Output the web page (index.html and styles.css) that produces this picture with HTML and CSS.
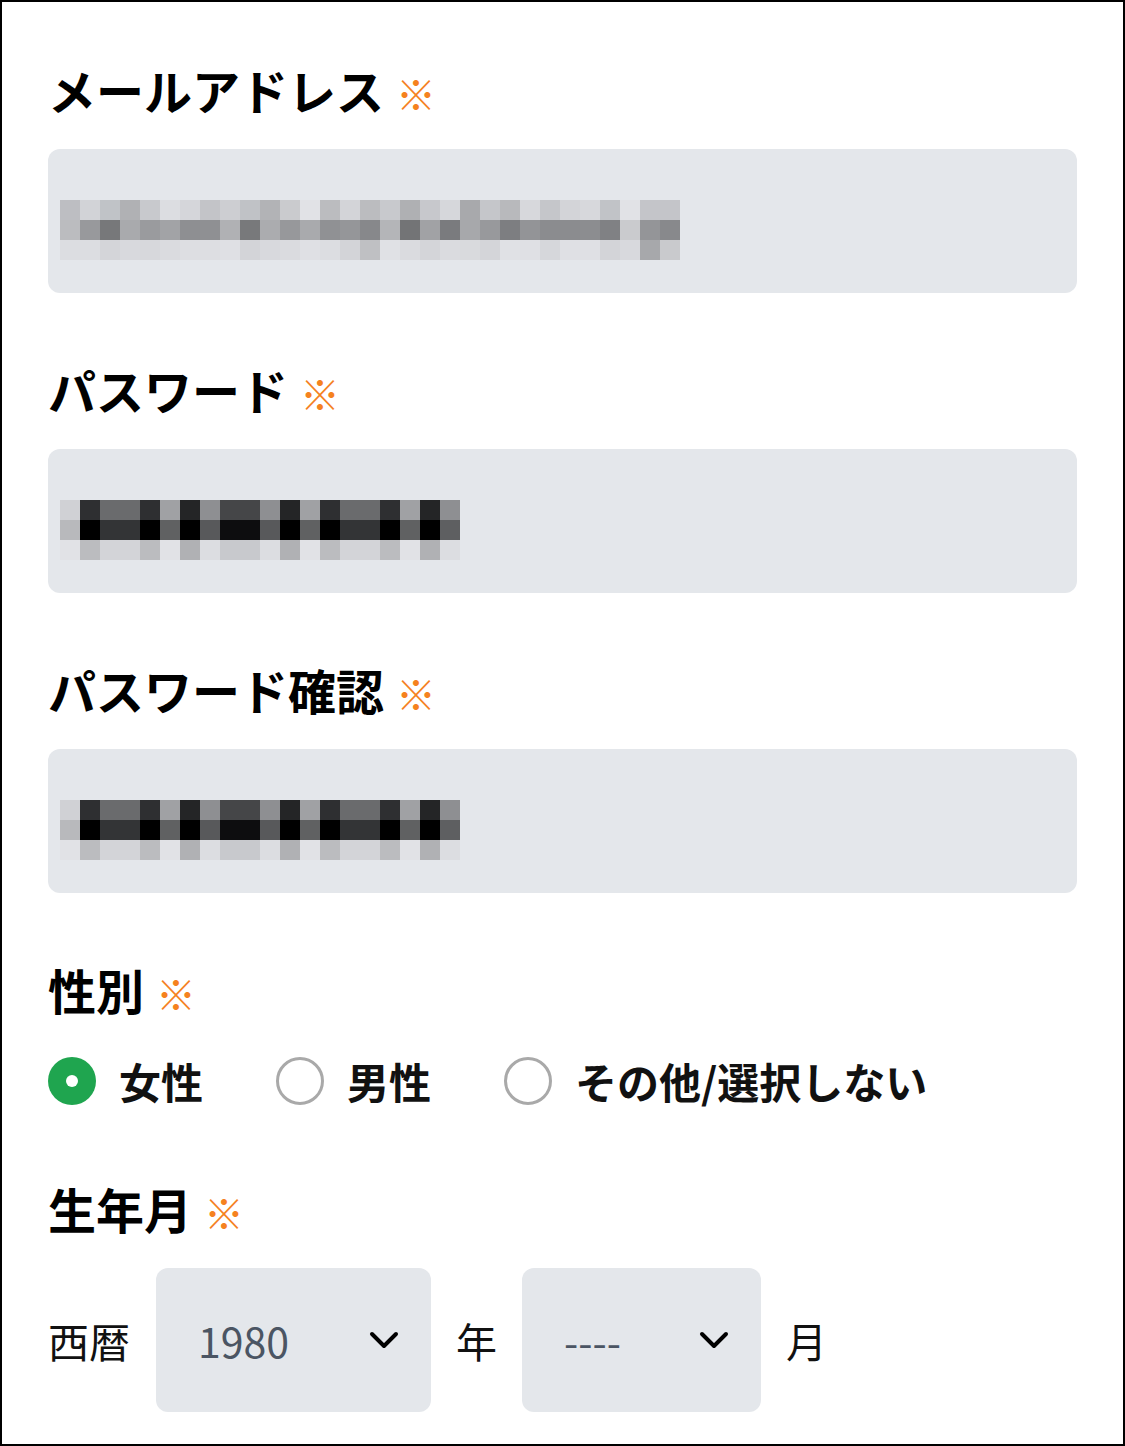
FILE: index.html
```html
<!DOCTYPE html>
<html lang="ja">
<head>
<meta charset="utf-8">
<title>会員登録</title>
<link rel="stylesheet" href="styles.css">
<script src="script.js" defer></script>
</head>
<body>
<div class="page">
  <div class="field">
    <div class="label">メールアドレス<span class="req">※</span></div>
    <div class="input"><div class="mosaic" data-set="email"></div></div>
  </div>
  <div class="field">
    <div class="label">パスワード<span class="req">※</span></div>
    <div class="input"><div class="mosaic" data-set="pass"></div></div>
  </div>
  <div class="field">
    <div class="label">パスワード確認<span class="req">※</span></div>
    <div class="input"><div class="mosaic" data-set="pass"></div></div>
  </div>
  <div class="field field-gender">
    <div class="label">性別<span class="req">※</span></div>
    <div class="radios">
      <div class="radio-item"><span class="radio checked"></span><span class="radio-text">女性</span></div>
      <div class="radio-item"><span class="radio"></span><span class="radio-text">男性</span></div>
      <div class="radio-item"><span class="radio"></span><span class="radio-text">その他/選択しない</span></div>
    </div>
  </div>
  <div class="field field-birth">
    <div class="label">生年月<span class="req">※</span></div>
    <div class="date-row">
      <span class="date-text">西暦</span>
      <div class="select select-year">
        <span class="select-value">1980</span>
        <svg class="chevron" viewBox="0 0 30 18" width="30" height="18"><path d="M3 3 L15 15 L27 3" fill="none" stroke="#000" stroke-width="4" stroke-linecap="round" stroke-linejoin="round"/></svg>
      </div>
      <span class="date-text">年</span>
      <div class="select select-month">
        <span class="select-value">----</span>
        <svg class="chevron" viewBox="0 0 30 18" width="30" height="18"><path d="M3 3 L15 15 L27 3" fill="none" stroke="#000" stroke-width="4" stroke-linecap="round" stroke-linejoin="round"/></svg>
      </div>
      <span class="date-text">月</span>
    </div>
  </div>
</div>
</body>
</html>
```

FILE: styles.css
```css
html, body {
  margin: 0;
  padding: 0;
  background: #fff;
}

body {
  font-family: "Noto Sans CJK JP", "Noto Sans", sans-serif;
  color: #111;
}

.page {
  width: 1125px;
  height: 1446px;
  box-sizing: border-box;
  border: 2px solid #000;
  padding: 57px 46px 0;
  overflow: hidden;
}

.field {
  margin-bottom: 66px;
}

.label {
  height: 60px;
  line-height: 60px;
  font-size: 48px;
  font-weight: 700;
  color: #000;
  white-space: nowrap;
}

.req {
  font-size: 40px;
  font-weight: 400;
  color: #f5821f;
  margin-left: 12px;
}

.input {
  margin-top: 30px;
  height: 144px;
  box-sizing: border-box;
  background: #e4e7eb;
  border-radius: 12px;
  padding: 51px 0 0 12px;
}

.mosaic {
  display: grid;
  grid-auto-flow: column;
  grid-template-rows: repeat(3, 20px);
  grid-auto-columns: 20px;
  width: max-content;
}

.mosaic span {
  display: block;
  width: 20px;
  height: 20px;
}

.field-gender {
  margin-bottom: 73px;
}

.radios {
  margin-top: 38px;
  display: flex;
  align-items: center;
  gap: 73px;
  height: 48px;
}

.radio-item {
  display: flex;
  align-items: center;
  gap: 23px;
}

.radio {
  width: 48px;
  height: 48px;
  box-sizing: border-box;
  border-radius: 50%;
  border: 3px solid #a9a9a9;
  display: flex;
  align-items: center;
  justify-content: center;
  flex: none;
}

.radio.checked {
  border: none;
  background: #1fa54f;
}

.radio.checked::after {
  content: "";
  width: 12px;
  height: 12px;
  border-radius: 50%;
  background: #fff;
}

.radio-text {
  font-size: 42px;
  font-weight: 700;
  line-height: 48px;
  color: #111;
  white-space: nowrap;
}

.field-birth {
  margin-bottom: 0;
}

.date-row {
  margin-top: 30px;
  display: flex;
  align-items: center;
  gap: 25px;
}

.date-text {
  font-size: 41px;
  font-weight: 400;
  color: #111;
  white-space: nowrap;
}

.select {
  height: 144px;
  box-sizing: border-box;
  background: #e4e7eb;
  border-radius: 12px;
  display: flex;
  align-items: center;
  justify-content: space-between;
  padding: 0 32px 0 42px;
}

.select-year {
  width: 275px;
  margin-left: 1px;
}

.select-month {
  width: 239px;
}

.select-value {
  font-size: 41px;
  font-weight: 400;
  color: #4b5563;
}

.chevron {
  display: block;
  flex: none;
}
```

FILE: script.js
```js
(function () {
  var sets = {
    email: [
      "bdbec2 d2d3d7 c0c3c7 b0b1b4 c8c9cd dcdde1 d5d6da c3c4c8 cdced2 c0c2c6 b2b3b6 cacbce e1e2e6 bbbcbf d3d4d8 bbbcbf c8c9cd afb0b3 c7c8cc d6d7db a8a9ac c5c6ca b8b9bc d7d8dc c5c6ca d3d4d8 d7d8dc c1c3c7 e1e2e6 c4c5c9 c4c5c9",
      "bbbcbf 98999c 77787a a9aaad 9a9b9e a2a3a6 8e8f92 8f9093 b0b1b4 78797b abacaf 97989b a9aaad 909194 959699 87888b b4b5b8 737476 a1a2a5 7a7b7e a7a8ab 98999c 7d7e81 939497 8b8c8f 8b8c8f 8c8d90 808184 cacbce 949598 88898c",
      "dcdde1 dcdde1 d4d5d9 d8d9dd d7d8dc dadbdf dddee2 dddee2 dfe0e4 d3d4d8 d8d9dd dadbdf dfe0e4 dcdde1 d3d4d8 bfc0c3 e0e1e5 dadbdf d4d5d9 dadbdf d9dadd d4d5d9 e0e1e5 dfe0e4 d6d7db dfe0e4 dfe0e4 d3d4d8 d8d9dd a7a8ab c9cacd"
    ],
    pass: [
      "d0d1d5 2e2f31 6a6b6d 6a6b6d 2e2f31 a0a1a4 242526 8e8f92 454648 454648 8e8f92 242526 a0a1a4 2e2f31 6a6b6d 6a6b6d 2e2f31 a0a1a4 242526 8e8f92",
      "b8b9bc 000000 333436 333436 000000 606162 000000 58595b 0d0d0f 0d0d0f 58595b 000000 606162 000000 333436 333436 000000 606162 000000 5e5f61",
      "e1e2e6 bbbcbf d3d4d8 d3d4d8 bbbcbf e1e2e6 b0b1b4 dcdde1 c8c9cd c8c9cd dcdde1 b0b1b4 e1e2e6 bbbcbf d3d4d8 d3d4d8 bbbcbf e1e2e6 b0b1b4 dcdde1"
    ]
  };
  var boxes = document.querySelectorAll(".mosaic");
  for (var b = 0; b < boxes.length; b++) {
    var rows = sets[boxes[b].getAttribute("data-set")].map(function (r) { return r.split(" "); });
    var cols = rows[0].length;
    for (var c = 0; c < cols; c++) {
      for (var r = 0; r < rows.length; r++) {
        var cell = document.createElement("span");
        cell.style.background = "#" + rows[r][c];
        boxes[b].appendChild(cell);
      }
    }
  }
})();
```
